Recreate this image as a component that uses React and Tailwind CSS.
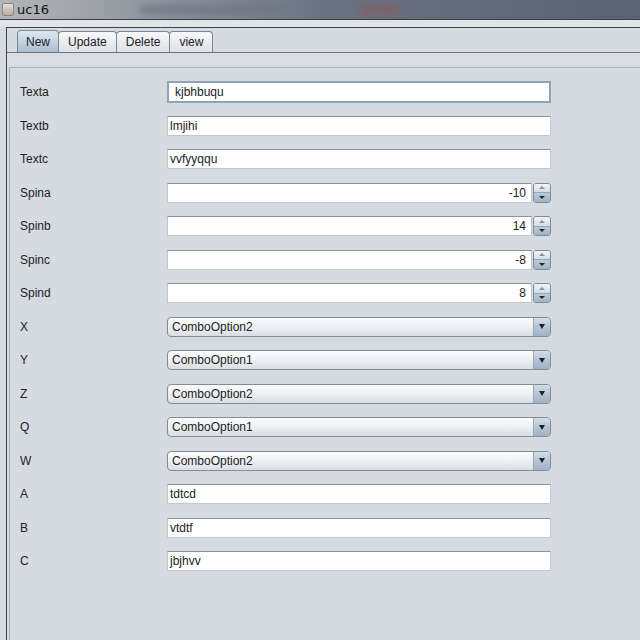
import React from "react";

const rows = [
  { label: "Texta", type: "text", value: "kjbhbuqu", focused: true },
  { label: "Textb", type: "text", value: "lmjihi" },
  { label: "Textc", type: "text", value: "vvfyyqqu" },
  { label: "Spina", type: "spin", value: "-10" },
  { label: "Spinb", type: "spin", value: "14" },
  { label: "Spinc", type: "spin", value: "-8" },
  { label: "Spind", type: "spin", value: "8" },
  { label: "X", type: "combo", value: "ComboOption2" },
  { label: "Y", type: "combo", value: "ComboOption1" },
  { label: "Z", type: "combo", value: "ComboOption2" },
  { label: "Q", type: "combo", value: "ComboOption1" },
  { label: "W", type: "combo", value: "ComboOption2" },
  { label: "A", type: "text", value: "tdtcd" },
  { label: "B", type: "text", value: "vtdtf" },
  { label: "C", type: "text", value: "jbjhvv" },
];

const tabs = ["New", "Update", "Delete", "view"];

function TextField({ value, focused }) {
  if (focused) {
    return (
      <div className="w-[384px] h-[22px] -my-[1px] border-2 border-[#8fa3b8] bg-white flex items-center pl-[6px] text-[12px] text-[#222]">
        {value}
      </div>
    );
  }
  return (
    <div className="w-[384px] h-[20px] border border-[#c3c7cc] border-t-[#8e939a] bg-white flex items-center pl-[2px] text-[12px] text-[#222]">
      {value}
    </div>
  );
}

function SpinField({ value }) {
  return (
    <div className="w-[384px] h-[20px] flex">
      <div className="flex-1 border border-[#c3c7cc] border-t-[#8e939a] bg-white flex items-center justify-end pr-[5px] text-[12px] text-[#222]">
        {value}
      </div>
      <div className="w-[18px] flex flex-col border border-[#7f8a98] rounded-[3px] ml-[1px] overflow-hidden">
        <div className="flex-1 bg-gradient-to-b from-[#f1f4f8] to-[#d3dde8] flex items-center justify-center border-b border-[#9aa6b4]">
          <div className="w-0 h-0 border-l-[3px] border-r-[3px] border-b-[3px] border-l-transparent border-r-transparent border-b-[#8893a0]" />
        </div>
        <div className="flex-1 bg-gradient-to-b from-[#bccbdb] to-[#9fb3c8] flex items-center justify-center">
          <div className="w-0 h-0 border-l-[3px] border-r-[3px] border-t-[3px] border-l-transparent border-r-transparent border-t-[#1c2530]" />
        </div>
      </div>
    </div>
  );
}

function ComboField({ value }) {
  return (
    <div className="w-[384px] h-[20px] flex border border-[#858c96] rounded-[4px] overflow-hidden bg-gradient-to-b from-[#fbfcfd] via-[#eef0f3] to-[#d9dde3]">
      <div className="flex-1 flex items-center pl-[4px] text-[12px] text-[#222]">{value}</div>
      <div className="w-[17px] border-l border-[#9ba6b3] bg-gradient-to-b from-[#d4dde7] via-[#b5c5d6] to-[#9fb2c6] flex items-center justify-center">
        <div className="w-0 h-0 border-l-[3.5px] border-r-[3.5px] border-t-[5px] border-l-transparent border-r-transparent border-t-[#1a2230]" />
      </div>
    </div>
  );
}

export default function App() {
  return (
    <div
      className="w-[640px] h-[640px] overflow-hidden bg-[#d6dae1] flex flex-col"
      style={{ fontFamily: '"Liberation Sans", Arial, sans-serif' }}
    >
      {/* title bar */}
      <div className="h-[19px] flex items-center bg-gradient-to-r from-[#b3b6b9] via-[#6b7381] to-[#5b6373]">
        <div className="w-[12px] h-[13px] ml-[2px] rounded-[2px] bg-gradient-to-b from-[#e8e2da] to-[#b8aca0] border border-[#8a8580]" />
        <span className="ml-[3px] text-[13px] text-[#111]" style={{ fontFamily: '"DejaVu Sans", sans-serif' }}>
          uc16
        </span>
        <div className="ml-[90px] h-[10px] w-[150px] rounded-full bg-[#6f7682] opacity-70 blur-[3px]" />
        <div className="ml-[70px] h-[10px] w-[40px] rounded-full bg-[#8a5a5a] opacity-60 blur-[3px]" />
      </div>
      <div className="h-px bg-[#3a404a]" />
      <div className="h-[7px] bg-[#e1e4e9]" />

      <div className="flex-1 flex">
        <div className="w-[6px] bg-[#d6dae1]" />
        <div className="flex-1 border-l border-t border-[#3f444c] flex flex-col">
          {/* tabs */}
          <div className="h-[3px]" />
          <div className="flex pl-[10px] border-b border-[#6c7480] h-[22px] items-end">
            {tabs.map((t, i) => (
              <div
                key={t}
                className={
                  "flex items-center border border-b-0 border-[#7c8590] rounded-t-[4px] text-[12px] text-[#222] -mr-px " +
                  (i === 0
                    ? "px-[8px] bg-gradient-to-b from-[#dfe8f1] to-[#a9bdd2] h-[22px]"
                    : "px-[9px] bg-gradient-to-b from-[#f7f8fa] to-[#dde1e6] h-[21px]")
                }
              >
                {t}
              </div>
            ))}
          </div>
          <div className="h-[14px] bg-[#d9dde3]" />
          <div className="flex-1 ml-[2px] border-l border-t border-[#aab0b8] flex flex-col pt-[14px]">
            <div className="flex flex-col gap-[13.5px]">
              {rows.map((r) => (
                <div key={r.label} className="flex items-center h-[20px]">
                  <div className="w-[157px] pl-[10px] text-[12px] text-[#222]">{r.label}</div>
                  {r.type === "text" && <TextField value={r.value} focused={r.focused} />}
                  {r.type === "spin" && <SpinField value={r.value} />}
                  {r.type === "combo" && <ComboField value={r.value} />}
                </div>
              ))}
            </div>
          </div>
        </div>
      </div>
    </div>
  );
}
